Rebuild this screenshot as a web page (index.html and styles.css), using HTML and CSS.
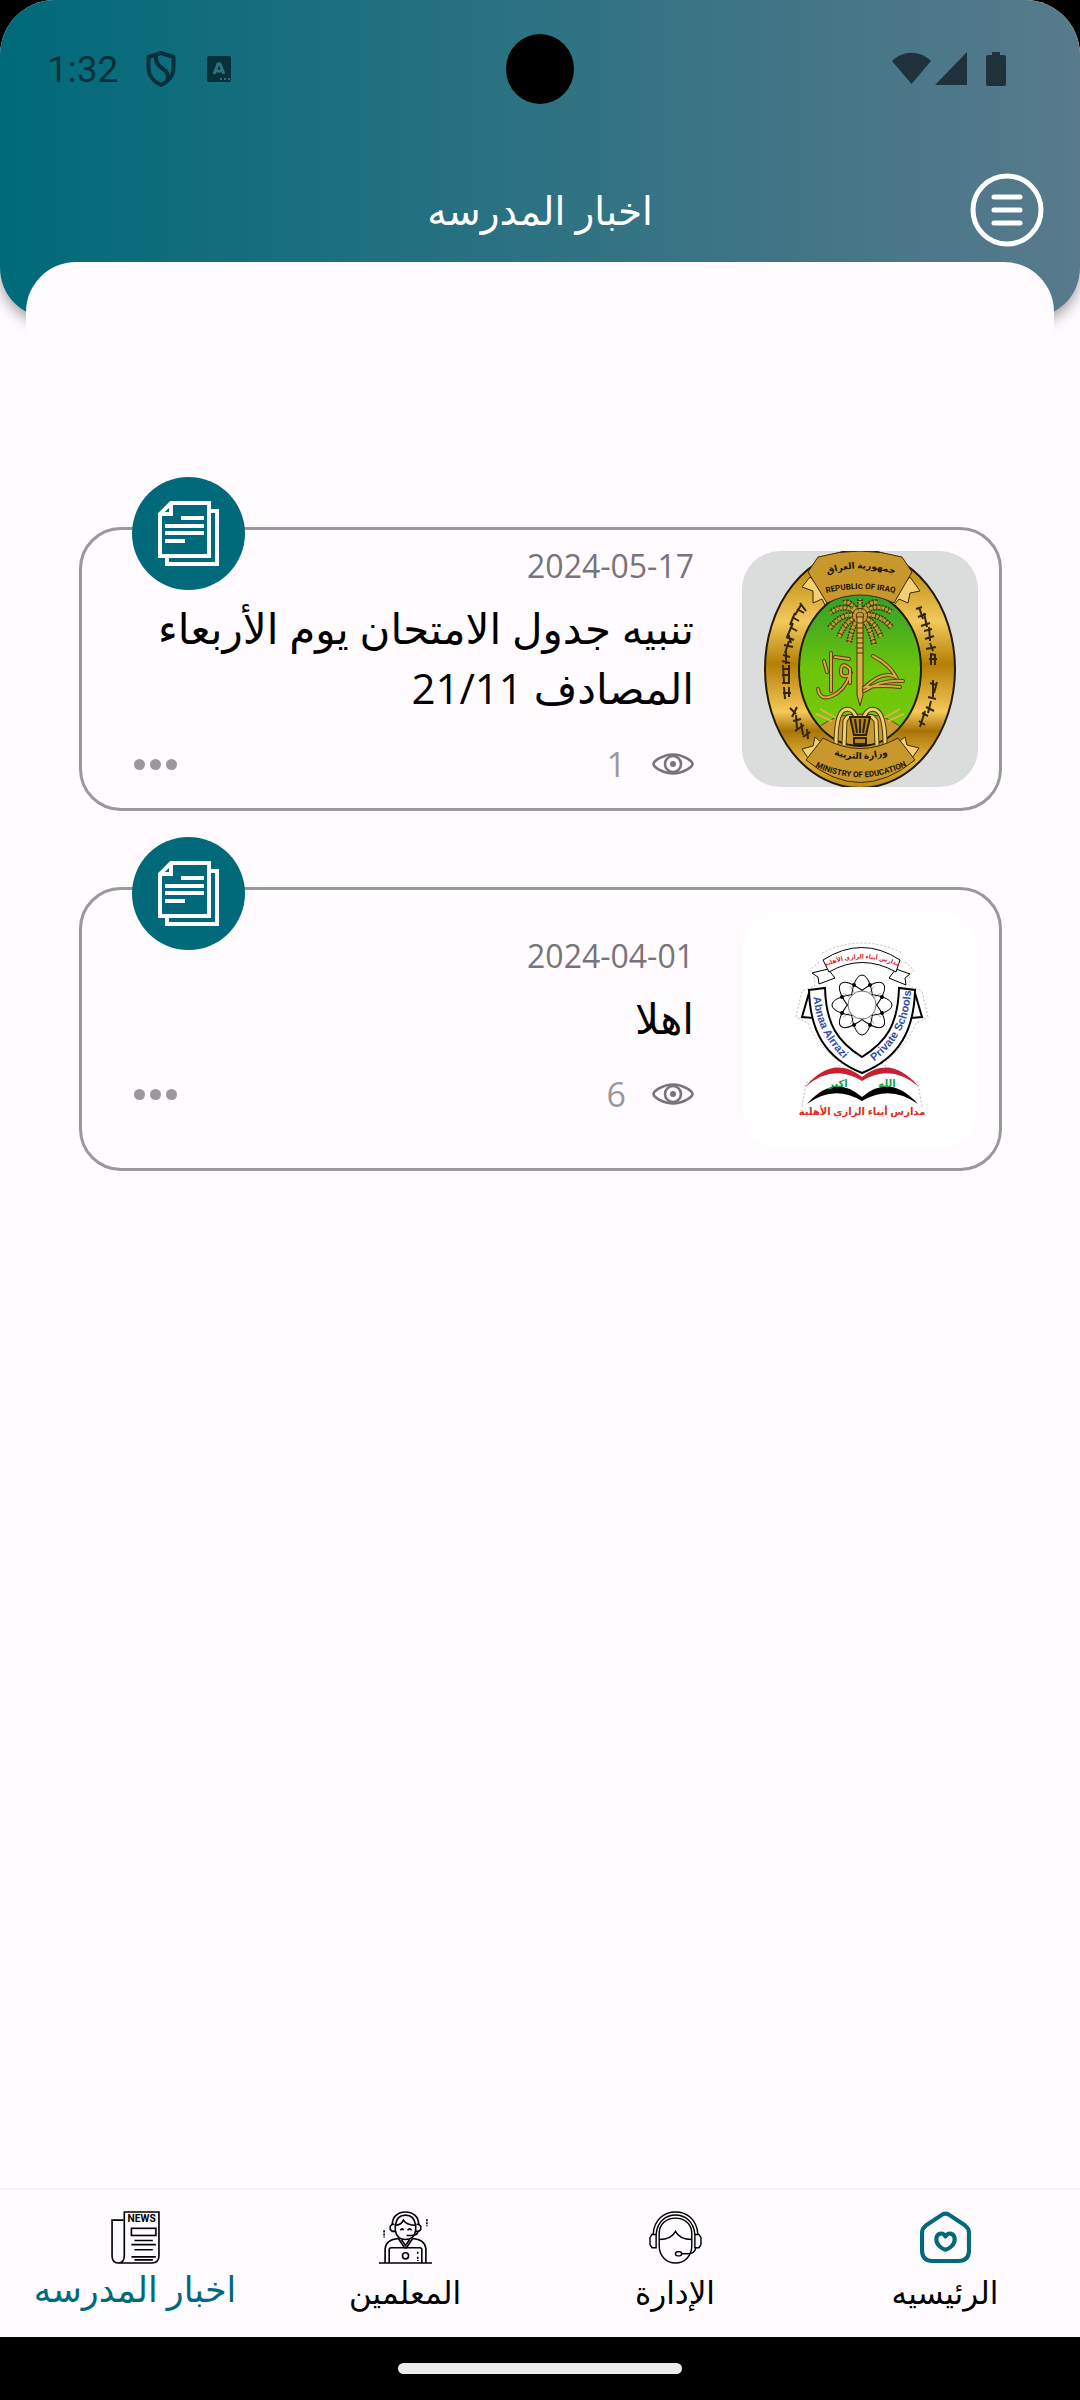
FILE: index.html
```html
<!DOCTYPE html>
<html lang="ar" dir="rtl">
<head>
  <meta charset="UTF-8">
  <meta name="viewport" content="width=device-width, initial-scale=1">
  <title>اخبار المدرسه</title>
  <link rel="stylesheet" href="styles.css">
</head>
<body>

  <!-- Shared icons -->
  <svg class="sprite" aria-hidden="true">
    <symbol id="icon-pages" viewBox="0 0 61 66">
      <g fill="none" stroke="#fff" stroke-width="4">
        <path d="M13 2H51V55H2V13Z"/>
        <path d="M13 2V13H2"/>
        <path d="M51 10H59V63H9V56"/>
        <path d="M23 17H46M7 25H46M7 32H46M7 40H27"/>
      </g>
    </symbol>
    <symbol id="icon-eye" viewBox="0 0 42 22">
      <g fill="none" stroke="#77747a" stroke-width="2.6">
        <path d="M1.500 11C1.500 8 11 1.500 21 1.500S40.500 8 40.500 11S31 20.500 21 20.500S1.500 14 1.500 11Z"/>
        <circle cx="21" cy="11" r="8"/>
      </g>
      <circle cx="21" cy="11" r="3" fill="#77747a"/>
    </symbol>
    <symbol id="icon-dots" viewBox="0 0 43 11">
      <g fill="#9b989c">
        <circle cx="5.5" cy="5.5" r="5.5"/>
        <circle cx="21.5" cy="5.5" r="5.5"/>
        <circle cx="37.5" cy="5.5" r="5.5"/>
      </g>
    </symbol>
  </svg>

  <div class="screen">

    <!-- Header -->
    <header>
      <div class="status-bar" dir="ltr">
        <span class="clock">1:32</span>
        <svg class="shield" viewBox="0 0 30 36">
          <path d="M15 2L27.500 6V17C27.500 25 22 31 15 34C8 31 2.500 25 2.500 17V6Z" fill="none" stroke="#06303a" stroke-width="4" stroke-linejoin="round"/>
          <path d="M10 4C9 12 13 15 17 18C22 21 23 25 21 30" fill="none" stroke="#06303a" stroke-width="4"/>
        </svg>
        <svg class="app-mark" viewBox="0 0 24 26">
          <rect width="24" height="26" rx="2" fill="#06303a"/>
          <path d="M7 18L11 8H13L17 18M9 15H15" fill="none" stroke="#2d7280" stroke-width="3"/>
          <path d="M13 23h2M17 23h2M21 23h2" stroke="#2d7280" stroke-width="2"/>
        </svg>
        <span class="camera"></span>
        <svg class="signals" viewBox="0 0 114 34">
          <g fill="#1f323b">
            <path d="M0 9C11 -2 28 -2 39 9L19.500 32Z"/>
            <path d="M43 33L75 0V33Z"/>
            <path d="M100 0H108V3H112Q114 3 114 5V32Q114 34 112 34H96Q94 34 94 32V5Q94 3 96 3H100Z"/>
          </g>
        </svg>
      </div>
      <div class="title-bar">
        <button class="menu-btn" aria-label="القائمة">
          <svg viewBox="0 0 74 74" fill="none" stroke="#fff">
            <circle cx="37" cy="37" r="34" stroke-width="5"/>
            <path d="M24 24H50M24 37H50M24 50H50" stroke-width="5" stroke-linecap="round"/>
          </svg>
        </button>
        <h1>اخبار المدرسه</h1>
      </div>
    </header>

    <!-- News list -->
    <main>
      <article class="news-card">
        <span class="badge"><svg><use href="#icon-pages"/></svg></span>
        <svg class="thumb" viewBox="0 0 236 236" role="img" aria-label="وزارة التربية">
          <defs>
            <linearGradient id="gold" x1="0" y1="0" x2="0" y2="1">
              <stop offset="0" stop-color="#b8860b"/>
              <stop offset=".12" stop-color="#c8981f"/>
              <stop offset=".3" stop-color="#f3c95c"/>
              <stop offset=".48" stop-color="#b57f06"/>
              <stop offset=".68" stop-color="#f5c85a"/>
              <stop offset=".76" stop-color="#a87404"/>
              <stop offset=".88" stop-color="#e5b53a"/>
              <stop offset="1" stop-color="#b98a14"/>
            </linearGradient>
            <linearGradient id="green" x1="0" y1="0" x2="0" y2="1">
              <stop offset="0" stop-color="#2f9e2b"/>
              <stop offset=".5" stop-color="#6cc40b"/>
              <stop offset="1" stop-color="#7bcb0a"/>
            </linearGradient>
            <clipPath id="oval"><ellipse cx="118" cy="118" rx="60" ry="76"/></clipPath>
            <path id="arc-ar-top" d="M80 25Q118 10 158 25"/>
            <path id="arc-en-top" d="M80 43Q118 33 157 43"/>
            <path id="arc-ar-low" d="M80 199Q118 217 158 199"/>
            <path id="arc-en-low" d="M66 212Q118 241 172 211"/>
          </defs>
          <rect width="236" height="236" fill="#dadddc"/>
          <ellipse cx="118" cy="118" rx="95" ry="119" fill="url(#gold)" stroke="#221a08" stroke-width="2"/>
          <ellipse cx="118" cy="118" rx="61" ry="77" fill="url(#green)" stroke="#221a08" stroke-width="2"/>

          <g clip-path="url(#oval)">
            <ellipse cx="118" cy="188" rx="46" ry="25" fill="#c99a2c" stroke="#5c4306"/>
            <path d="M74 163L90 170M78 158L94 167M162 163L146 170M158 158L142 167" stroke="#d9b34c" stroke-width="2"/>
          </g>
          <!-- palm -->
          <g fill="none" stroke="#4d3505" stroke-width="6">
            <path d="M118 65Q104 50 88 62M118 65Q100 60 87 78M118 65Q104 68 97 86M118 65Q110 74 107 92M118 65Q132 50 149 61M118 65Q136 60 150 77M118 65Q132 68 139 86M118 65Q128 74 132 94M118 65Q108 48 102 52M118 65Q128 48 136 52M118 65V48" stroke-dasharray="2 1"/>
          </g>
          <g fill="none" stroke="#c79a3e" stroke-width="3">
            <path d="M118 65Q104 50 88 62M118 65Q100 60 87 78M118 65Q104 68 97 86M118 65Q110 74 107 92M118 65Q132 50 149 61M118 65Q136 60 150 77M118 65Q132 68 139 86M118 65Q128 74 132 94M118 65Q108 48 102 52M118 65Q128 48 136 52M118 65V48" stroke-dasharray="3 1"/>
          </g>
          <path d="M115 66H121V144L118 155L115 144Z" fill="#dcae52" stroke="#4d3505"/>
          <path d="M115 72H121M115 77H121M115 82H121M115 87H121M115 92H121M115 97H121M115 102H121" stroke="#4d3505"/>
          <!-- calligraphy and book -->
          <g fill="none" stroke="#5c3d08" stroke-width="4" stroke-linecap="round">
            <path d="M89 102V140M76 138Q78 150 90 145T108 124Q98 128 99 119T108 118V132M93 106L107 108M82 110L85 121"/>
            <path d="M131 105Q148 114 154 126Q140 119 122 137M122 140Q140 128 161 130M124 136Q142 134 158 136"/>
          </g>
          <g fill="none" stroke="#d8a94c" stroke-width="2" stroke-linecap="round">
            <path d="M89 102V140M76 138Q78 150 90 145T108 124Q98 128 99 119T108 118V132M93 106L107 108M82 110L85 121"/>
            <path d="M131 105Q148 114 154 126Q140 119 122 137M122 140Q140 128 161 130M124 136Q142 134 158 136"/>
          </g>
          <!-- fountain -->
          <g fill="none" stroke="#4d3505" stroke-width="5">
            <path d="M116 172Q112 155 102 159Q94 163 94 194M114 172Q108 160 103 170L102 194M120 172Q124 155 134 159Q143 163 143 194M122 172Q128 160 134 170L135 194"/>
          </g>
          <g fill="none" stroke="#ecd078" stroke-width="3">
            <path d="M116 172Q112 155 102 159Q94 163 94 194M114 172Q108 160 103 170L102 194M120 172Q124 155 134 159Q143 163 143 194M122 172Q128 160 134 170L135 194"/>
          </g>
          <path d="M108 166H128L124 184H112ZM112 187H124V193H112Z" fill="#b5861d" stroke="#2c2005" stroke-width="2"/>
          <path d="M113 168L115 182M118 168V182M123 168L121 182" stroke="#2c2005" stroke-width="2"/>

          <!-- banners -->
          <g fill="#c9982c" stroke="#3b2a06">
            <path d="M68 26L60 36L71 40L71 52L80 48L83 54L88 48ZM168 26L178 40L168 42L166 52L157 48L152 54L148 48Z" fill="#f4cf74"/>
            <path d="M76 6Q118 -6 160 6L170 21L152 52Q118 36 85 52L66 21Z"/>
            <path d="M68 210L60 198L71 195L73 186L80 192ZM168 210L177 197L165 194L163 186L155 192Z" fill="#f4cf74"/>
            <path d="M81 187Q118 208 156 187L173 209Q118 254 64 209Z"/>
          </g>
          <g class="seal-text">
            <text class="ar"><textPath href="#arc-ar-top" startOffset="50%">جمهورية العراق</textPath></text>
            <text><textPath href="#arc-en-top" startOffset="50%">REPUBLIC OF IRAQ</textPath></text>
            <text class="ar"><textPath href="#arc-ar-low" startOffset="50%">وزارة التربية</textPath></text>
            <text><textPath href="#arc-en-low" startOffset="50%">MINISTRY OF EDUCATION</textPath></text>
          </g>
          <!-- side script -->
          <g fill="none" stroke="#33260a" stroke-width="2">
            <path d="M58 52L64 60M55 58L62 62M59 54L53 64M50 66L57 70M53 62L48 74M48 76L55 80M51 72L45 86M44 86L52 89M46 82L49 92M42 94L51 96M47 90L43 102M41 104L48 106M44 100V113M40 110L48 112M40 118H48M41 114L42 132M47 114V131M40 124H48M40 132H48M42 136L43 148M47 136V146M41 142H49M48 157L54 163M55 156L50 166M51 170L59 168M54 164L55 178M53 180L62 174M59 172L61 184M61 186L68 181M65 178L66 188"/>
            <path d="M174 58L180 56M177 56L181 68M176 66L184 63M182 62L185 76M179 75L188 72M182 80L190 78M187 76L188 90M183 88L192 85M188 92L191 100M184 98L194 96M188 103L194 104M187 108H195M189 104V114M193 104V114M188 132L194 134M191 129V146M195 131L192 142M186 146L194 148M189 150L186 162M184 156L192 160M180 162L186 165M183 160L178 176M177 170L183 174"/>
          </g>
        </svg>
        <div class="news-info">
          <time datetime="2024-05-17">2024-05-17</time>
          <h2>تنبيه جدول الامتحان يوم الأربعاء المصادف 21/11</h2>
          <div class="news-foot">
            <span class="views"><svg class="eye"><use href="#icon-eye"/></svg>1</span>
            <button class="more-btn" aria-label="المزيد"><svg><use href="#icon-dots"/></svg></button>
          </div>
        </div>
      </article>

      <article class="news-card">
        <span class="badge"><svg><use href="#icon-pages"/></svg></span>
        <svg class="thumb" viewBox="0 0 236 236" role="img" aria-label="مدارس أبناء الرازي الأهلية">
          <defs>
            <path id="arc-ribbon" d="M82 56Q120 39 158 56"/>
            <path id="arc-left" d="M71 83C74 112 83 130 104 150"/>
            <path id="arc-right" d="M134 149C157 129 166 112 169 82"/>
          </defs>
          <rect width="236" height="236" fill="#fff"/>
          <path d="M77 51L68 59L72 64L73 75L60 80L54 106L66 112Q74 134 100 153L64 172L60 196M163 51L172 59L168 64L167 75L180 80L186 106L174 112Q166 134 140 153L176 172L180 196M80 42Q120 22 160 42" fill="none" stroke="#bbb" stroke-dasharray="2 2"/>
          <g fill="#fff" stroke="#000">
            <path d="M67 82L60 106L71 107ZM173 82L180 106L169 107Z" stroke-width="2"/>
            <path d="M86 58L70 62L76 66L77 73L93 67ZM154 58L168 63L163 67L164 74L147 67Z"/>
            <path d="M81 49Q120 24 158 49L154 61Q120 42 87 61Z"/>
            <path d="M67 79L83 77C84 114 96 131 120 146C144 131 156 114 157 77L173 79C172 120 157 147 120 162C83 147 68 120 67 79Z" stroke-width="2"/>
          </g>
          <g fill="none" stroke="#000" transform="translate(120 94)">
            <path d="M-12 -19L12 19M12 -19L-12 19M-19 -12L19 12M-19 12L19 -12" stroke="#777" stroke-width=".6"/>
            <ellipse rx="30" ry="11"/>
            <ellipse rx="30" ry="11" transform="rotate(45)"/>
            <ellipse rx="30" ry="11" transform="rotate(90)"/>
            <ellipse rx="30" ry="11" transform="rotate(135)"/>
            <circle r="14" fill="#fff" stroke="#777"/>
          </g>
          <g transform="translate(120 94)">
            <circle cx="8" cy="-20" r="2"/><circle cx="-8" cy="-20" r="2"/>
            <circle cx="8" cy="20" r="2"/><circle cx="-8" cy="20" r="2"/>
            <circle cx="20" cy="-8" r="2"/><circle cx="-20" cy="-8" r="2"/>
            <circle cx="20" cy="8" r="2"/><circle cx="-20" cy="8" r="2"/>
          </g>
          <path d="M63 176Q91 143 120 166Q149 143 177 176Q149 152 120 170Q91 152 63 176Z" fill="#c8202f"/>
          <path d="M65 193Q92 162 120 186Q148 162 176 193Q148 173 120 190Q92 173 65 193Z"/>
          <g class="logo-text">
            <text class="ribbon"><textPath href="#arc-ribbon" startOffset="50%">مدارس أبناء الرازي الأهلية</textPath></text>
            <text class="blue"><textPath href="#arc-left" startOffset="50%">Abnaa Alrrazi</textPath></text>
            <text class="blue"><textPath href="#arc-right" startOffset="50%">Private Schools</textPath></text>
            <text class="green" x="145" y="176">الله</text>
            <text class="green" x="96" y="176">اكبر</text>
            <text class="red" x="120" y="204">مدارس أبناء الرازي الأهلية</text>
          </g>
        </svg>
        <div class="news-info">
          <time datetime="2024-04-01">2024-04-01</time>
          <h2>اهلا</h2>
          <div class="news-foot">
            <span class="views"><svg class="eye"><use href="#icon-eye"/></svg>6</span>
            <button class="more-btn" aria-label="المزيد"><svg><use href="#icon-dots"/></svg></button>
          </div>
        </div>
      </article>
    </main>

    <!-- Bottom navigation -->
    <nav>
      <a href="#home">
        <svg viewBox="0 0 52 52" fill="none" stroke="#006a7a" stroke-width="4" stroke-linejoin="round">
          <path d="M22 4Q26 1 30 4L45 14Q49 17 49 21V40Q48 49 39 49H13Q4 49 3 40V21Q3 17 7 14Z"/>
          <path d="M26 25C23 20 17 22 17 28C17 33 22 37 26 38C30 37 35 33 35 28C35 22 29 20 26 25Z"/>
        </svg>
        <span>الرئيسيه</span>
      </a>
      <a href="#management">
        <svg viewBox="0 0 52 52" fill="none" stroke="#000" stroke-width="1.4">
          <path d="M4 23C5 8 15 1 26 1S47 8 48 23M7 23C8 10 17 4 26 4S44 10 45 23"/>
          <path d="M10 34V22C10 13 17 7 26 7S42 13 42 22V34C42 44 35 51 26 51S10 44 10 34Z"/>
          <path d="M10 28Q22 28 26 20Q30 28 42 28"/>
          <path d="M7 23H3L1 26V33L3 36H7ZM45 23H49L51 26V33L49 36H45Z"/>
          <path d="M46 36Q45 42 38 42H32"/>
          <rect x="26" y="40" width="6" height="4" rx="2"/>
        </svg>
        <span>الإدارة</span>
      </a>
      <a href="#teachers">
        <svg viewBox="0 0 52 52" fill="none" stroke="#000" stroke-width="1.6">
          <path d="M0 51H52M6 51V37Q7 28 19 27M46 51V37Q45 28 33 27"/>
          <path d="M10 51V38Q10 36 12 36H40Q42 36 42 38V51"/>
          <circle cx="26" cy="44" r="3"/>
          <path d="M38 40V43M38 45V49M5 19V26M47 8V15" stroke-dasharray="2 1"/>
          <path d="M13 14C13 5 19 1 26 1S39 5 39 14M16 14C17 7 21 4 26 4S35 7 36 14"/>
          <path d="M16 14V19C17 25 21 28 26 28S35 25 36 19V14C31 14 26 12 24 9C22 13 19 14 16 14Z"/>
          <path d="M15 13H13L11 15V18L13 20H16M37 13H39L41 15V18L39 20H36M38 20Q38 24 31 24H27"/>
          <path d="M21 19Q23 16 24 19M28 19Q30 16 32 19M19 27L25 36L27 36L33 27M22 28L26 34L30 28"/>
        </svg>
        <span>المعلمين</span>
      </a>
      <a href="#news" class="active">
        <svg viewBox="0 0 52 52" fill="none" stroke="#000" stroke-width="1.6">
          <path d="M14 9H3V44Q3 51 9 51H42Q49 51 49 44V1H15V44Q15 51 9 51"/>
          <rect x="22" y="17" width="24" height="7"/>
          <path d="M25 29H43M22 33H46M25 38H43M22 45H46M25 48H43"/>
          <text class="news-word" x="32" y="11">NEWS</text>
        </svg>
        <span>اخبار المدرسه</span>
      </a>
    </nav>
  </div>

  <div class="home-bar"><span></span></div>

</body>
</html>
```
FILE: styles.css
```css
* {
  box-sizing: border-box;
}

body {
  margin: 0;
  min-height: 100vh;
  display: flex;
  flex-direction: column;
  background-color: #000;
  color: #000;
  font-family: 'Open Sans', 'DejaVu Sans', sans-serif;
}

h1, h2 {
  margin: 0;
  font-weight: 400;
}

button {
  padding: 0;
  border: none;
  background: none;
  cursor: pointer;
}

svg {
  display: block;
}

.sprite {
  position: absolute;
  width: 0;
  height: 0;
}

.screen {
  flex: 1;
  display: flex;
  flex-direction: column;
  background-color: #fffbff;
  border-radius: 55px 55px 0 0;
  overflow: hidden;
}

/* header */
header {
  height: 318px;
  background: linear-gradient(to right, #006a7a, #2d7282 50%, #587a8c);
  border-radius: 0 0 50px 50px;
  box-shadow: 0 6px 14px rgba(0, 0, 0, 0.35);
}

.status-bar {
  position: relative;
  height: 138px;
  padding: 0 74px 0 47px;
  display: flex;
  align-items: center;
}

.clock {
  font-family: Roboto, sans-serif;
  font-size: 37px;
  color: #06303a;
}

.shield {
  width: 30px;
  height: 36px;
  margin-left: 28px;
}

.app-mark {
  width: 24px;
  height: 26px;
  margin-left: 31px;
}

.camera {
  position: absolute;
  top: 34px;
  left: 50%;
  width: 68px;
  height: 70px;
  margin-left: -34px;
  border-radius: 50%;
  background-color: #000;
}

.signals {
  width: 114px;
  height: 34px;
  margin-left: auto;
}

.title-bar {
  height: 144px;
  padding: 0 36px;
  display: grid;
  grid-template-columns: 74px 1fr 74px;
  align-items: center;
}

.title-bar h1 {
  color: #fff;
  font-size: 39px;
  line-height: 60px;
  text-align: center;
}

.menu-btn svg {
  width: 74px;
  height: 74px;
}

/* news list */
main {
  position: relative;
  flex: 1;
  margin: -56px 26px 0;
  padding: 265px 52px 40px 53px;
  background-color: #fffbff;
  border-radius: 50px 50px 0 0;
}

.news-card {
  position: relative;
  display: flex;
  gap: 48px;
  margin-bottom: 76px;
  padding: 21px 21px 21px 52px;
  border: 3px solid #9b989c;
  border-radius: 42px;
}

.badge {
  position: absolute;
  top: -53px;
  left: 50px;
  width: 113px;
  height: 113px;
  border-radius: 50%;
  background-color: #006a7a;
  display: flex;
  align-items: center;
  justify-content: center;
}

.badge svg {
  width: 61px;
  height: 66px;
}

.thumb {
  flex: none;
  width: 236px;
  height: 236px;
  border-radius: 38px;
}

.news-info {
  flex: 1;
  display: flex;
  flex-direction: column;
  justify-content: center;
}

.news-info time {
  color: #77747a;
  font-size: 32px;
  line-height: 30px;
}

.news-info h2 {
  margin: 17px 0 23px;
  font-size: 42px;
  line-height: 60px;
}

.news-foot {
  height: 46px;
  display: flex;
  justify-content: space-between;
  align-items: center;
}

.views {
  display: flex;
  align-items: center;
  gap: 26px;
  color: #9b989c;
  font-size: 34px;
}

.eye {
  width: 42px;
  height: 22px;
}

.more-btn svg {
  width: 43px;
  height: 11px;
}

/* seal and logo lettering */
.seal-text {
  font-family: Roboto, 'DejaVu Sans', sans-serif;
  font-weight: 700;
  font-size: 8px;
  text-anchor: middle;
  fill: #1d1503;
}

.seal-text .ar {
  font-size: 9px;
}

.logo-text {
  direction: ltr;
  font-weight: 700;
  text-anchor: middle;
}

.logo-text .ribbon {
  font-size: 6px;
  fill: #d8232a;
}

.logo-text .blue {
  font-family: 'Liberation Sans', sans-serif;
  font-size: 11px;
  fill: #2f4fa8;
}

.logo-text .green {
  font-size: 10px;
  fill: #1f9d4d;
}

.logo-text .red {
  font-size: 10px;
  fill: #e02b20;
}

/* bottom navigation */
nav {
  position: sticky;
  bottom: 0;
  height: 149px;
  display: flex;
  background-color: #fffbff;
  border-top: 2px solid #f7f1f7;
}

nav a {
  flex: 1;
  padding-top: 21px;
  display: flex;
  flex-direction: column;
  align-items: center;
  gap: 8px;
  color: #000;
  font-size: 31px;
  line-height: 40px;
  text-decoration: none;
}

nav a.active {
  color: #006a7a;
  font-size: 35px;
  gap: 5px;
}

nav svg {
  width: 53px;
  height: 53px;
}

.news-word {
  font-family: Roboto, sans-serif;
  font-size: 10px;
  text-anchor: middle;
  fill: #000;
  stroke: none;
  font-weight: 700;
}

/* system gesture bar */
.home-bar {
  height: 63px;
  display: flex;
  align-items: center;
  justify-content: center;
}

.home-bar span {
  width: 284px;
  height: 11px;
  border-radius: 6px;
  background-color: #ebebeb;
}
```
